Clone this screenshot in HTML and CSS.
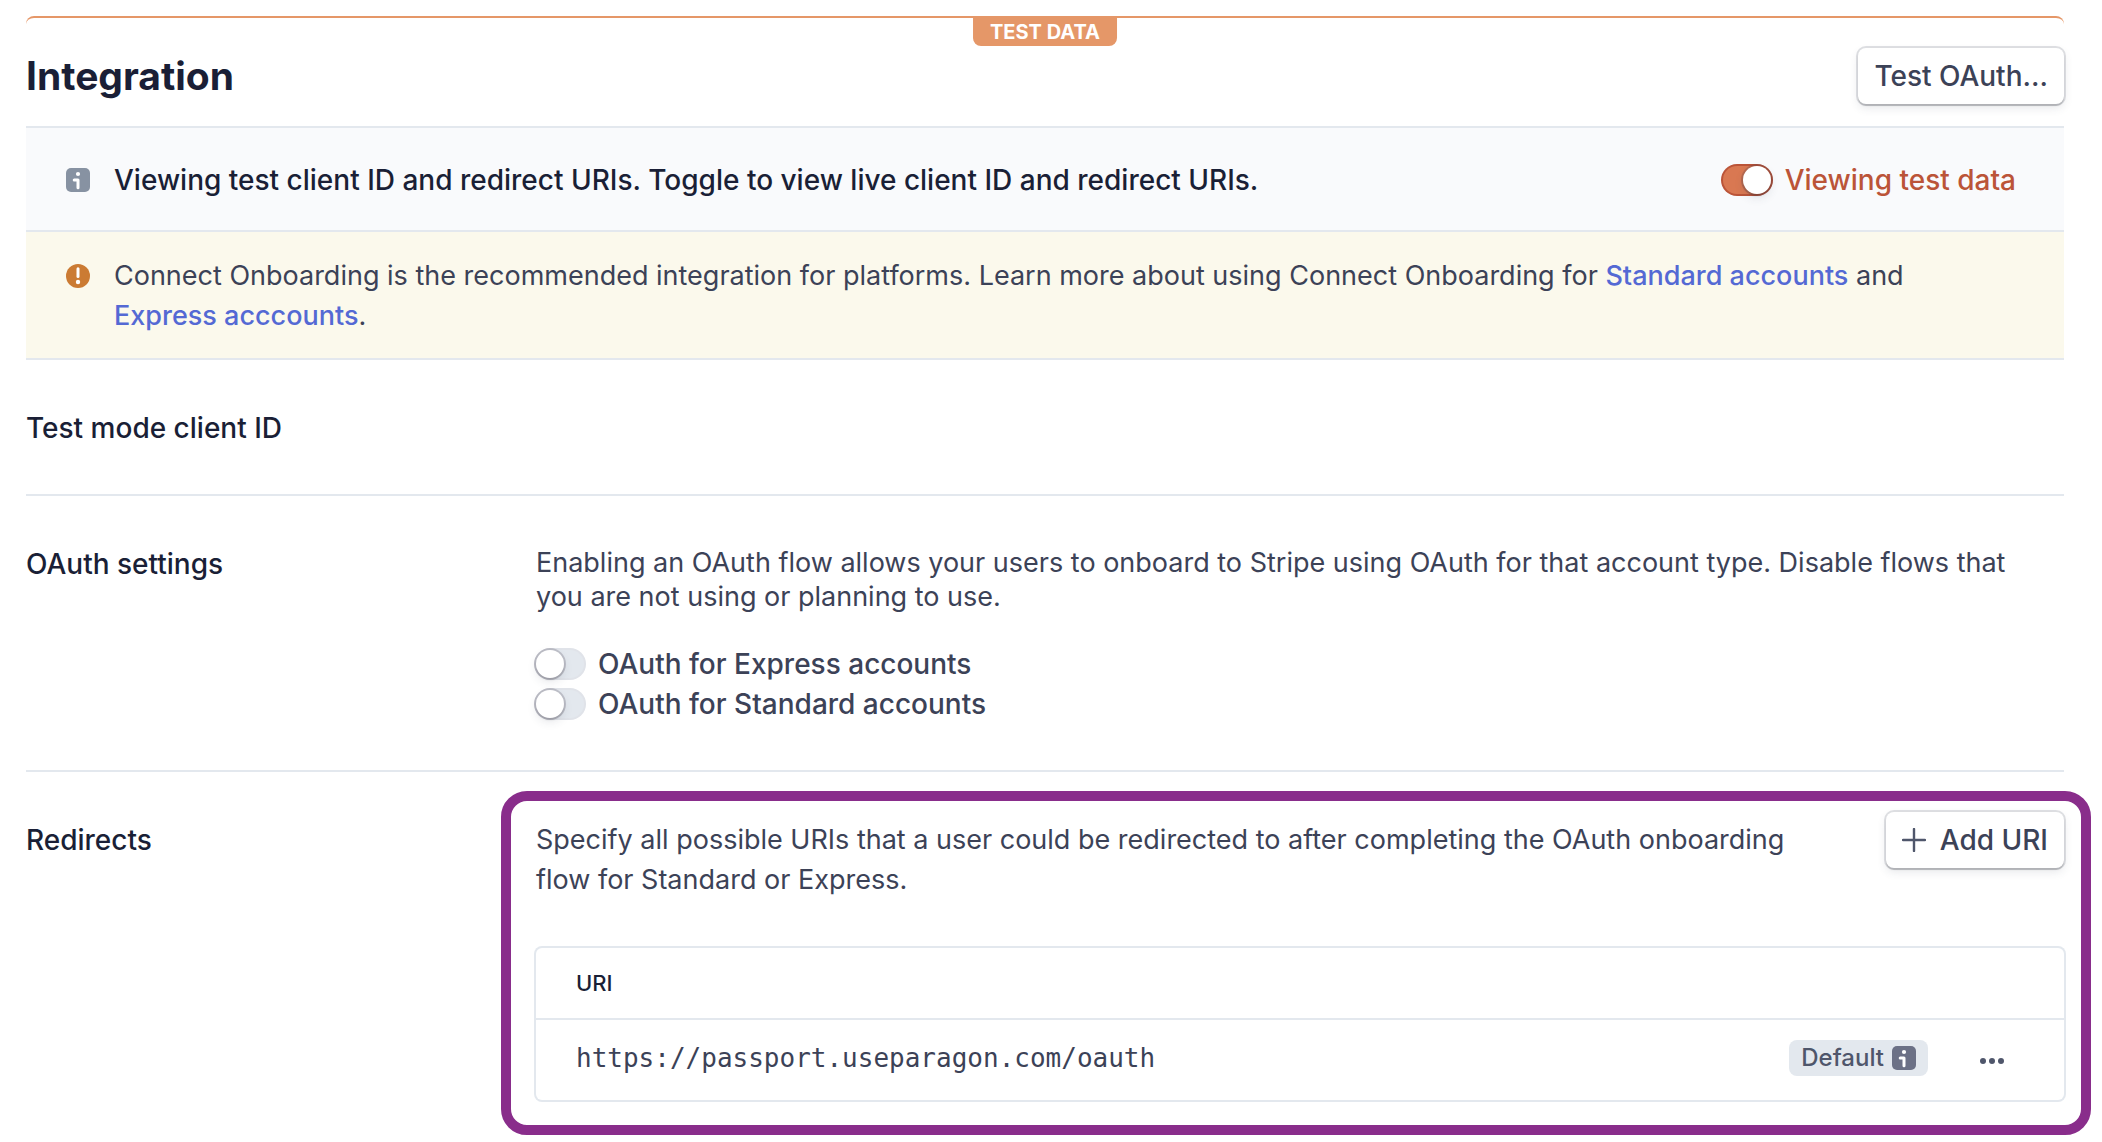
FILE: index.html
```html
<!DOCTYPE html>
<html lang="en">
<head>
<meta charset="utf-8">
<meta name="viewport" content="width=device-width, initial-scale=1">
<title>Integration</title>
<link rel="stylesheet" href="styles.css">
</head>
<body>
<main class="page">
  <header class="header">
    <span class="test-badge">TEST DATA</span>
    <h1 class="title">Integration</h1>
    <button class="button" type="button">Test OAuth...</button>
  </header>

  <div class="notice notice-info">
    <svg class="icon icon-info" viewBox="0 0 24 24" aria-hidden="true">
      <rect width="24" height="24" rx="5"/>
      <circle class="mark" cx="12" cy="6" r="2.1"/>
      <path class="stroke" d="M8.2 12H12v7.7"/>
    </svg>
    <p class="notice-text">Viewing test client ID and redirect URIs. Toggle to view live client ID and redirect URIs.</p>
    <label class="toggle toggle-test">
      <input class="switch" type="checkbox" role="switch" checked>
      <span>Viewing test data</span>
    </label>
  </div>

  <div class="notice notice-warning">
    <svg class="icon icon-warning" viewBox="0 0 24 24" aria-hidden="true">
      <circle cx="12" cy="12" r="12"/>
      <path class="stroke" d="M12 4.8v7.6"/>
      <circle class="mark" cx="12" cy="18" r="2.2"/>
    </svg>
    <p class="notice-text">Connect Onboarding is the recommended integration for platforms. Learn more about using Connect Onboarding for <a class="link" href="#standard">Standard accounts</a> and <a class="link" href="#express">Express acccounts</a>.</p>
  </div>

  <section class="section">
    <h2 class="section-label">Test mode client ID</h2>
  </section>

  <section class="section">
    <h2 class="section-label">OAuth settings</h2>
    <div class="section-body">
      <p class="description description-tight">Enabling an OAuth flow allows your users to onboard to Stripe using OAuth for that account type. Disable flows that you are not using or planning to use.</p>
      <div class="toggles">
        <label class="toggle">
          <input class="switch" type="checkbox" role="switch">
          <span>OAuth for Express accounts</span>
        </label>
        <label class="toggle">
          <input class="switch" type="checkbox" role="switch">
          <span>OAuth for Standard accounts</span>
        </label>
      </div>
    </div>
  </section>

  <section class="section section-redirects">
    <h2 class="section-label">Redirects</h2>
    <div class="section-body highlight">
      <div class="redirects-intro">
        <p class="description">Specify all possible URIs that a user could be redirected to after completing the OAuth onboarding flow for Standard or Express.</p>
        <button class="button" type="button">
          <svg class="icon icon-plus" viewBox="0 0 24 24" aria-hidden="true"><path d="M12 1v22M1 12h22"/></svg>
          Add URI
        </button>
      </div>
      <table class="uris">
        <thead>
          <tr><th colspan="2" scope="col">URI</th></tr>
        </thead>
        <tbody>
          <tr>
            <td class="uri">https://passport.useparagon.com/oauth</td>
            <td>
              <div class="uri-actions">
                <span class="pill">Default
                  <svg class="icon icon-default" viewBox="0 0 24 24" aria-hidden="true">
                    <rect width="24" height="24" rx="5"/>
                    <circle class="mark" cx="12" cy="6" r="2.1"/>
                    <path class="stroke" d="M8.2 12H12v7.7"/>
                  </svg>
                </span>
                <button class="more" type="button" aria-label="More options">
                  <svg class="icon" viewBox="0 0 24 24" aria-hidden="true"><circle cx="3" cy="15" r="3"/><circle cx="12" cy="15" r="3"/><circle cx="21" cy="15" r="3"/></svg>
                </button>
              </div>
            </td>
          </tr>
        </tbody>
      </table>
    </div>
  </section>
</main>
</body>
</html>
```

FILE: styles.css
```css
:root {
  --ink: #1a1f36;
  --text: #3c4257;
  --line: #e3e8ee;
  --test: #bb5438;
  --badge: #e59768;
}

* { box-sizing: border-box; }

body {
  margin: 0;
  background: #fff;
  color: var(--text);
  font: 400 27px/40px Inter, "Liberation Sans", sans-serif;
}

h1, h2, p { margin: 0; }

button { font: inherit; cursor: pointer; }

.page { padding: 16px 38px 40px 26px; }

.icon {
  display: block;
  flex: none;
  width: 24px;
  height: 24px;
}

/* Header */

.header {
  position: relative;
  display: flex;
  align-items: center;
  justify-content: space-between;
  padding: 30px 0 22px;
  border-top: 2px solid var(--badge);
  border-radius: 8px 8px 0 0;
}

.test-badge {
  position: absolute;
  top: -2px;
  left: 50%;
  transform: translateX(-50%);
  padding: 3px 17px 0;
  border-radius: 0 0 8px 8px;
  background: var(--badge);
  color: #fff;
  font-size: 20px;
  font-weight: 700;
  line-height: 27px;
}

.title {
  color: var(--ink);
  font-size: 39px;
  font-weight: 700;
  line-height: 56px;
}

.button {
  display: flex;
  flex: none;
  align-items: center;
  gap: 14px;
  height: 56px;
  padding: 0 16px;
  border: 0;
  border-radius: 8px;
  background: #fff;
  color: var(--text);
  font-size: 28px;
  font-weight: 500;
  box-shadow: 0 0 0 2px rgba(60, 66, 87, .16), 0 2px 1px rgba(0, 0, 0, .16), 0 4px 10px rgba(60, 66, 87, .12);
}

.icon-plus {
  fill: none;
  stroke: #4f566b;
  stroke-width: 2.4;
  stroke-linecap: round;
}

/* Notices */

.notice {
  display: flex;
  align-items: flex-start;
  gap: 24px;
  padding: 24px 56px 22px 40px;
  border-bottom: 2px solid var(--line);
}

.notice .icon { margin-top: 8px; }

.notice-text { flex: 1; }

.notice-info {
  padding: 32px 48px 30px 40px;
  border-top: 2px solid var(--line);
  background: #f9fafc;
  color: var(--ink);
  font-size: 28px;
  font-weight: 500;
}

.notice-warning { background: #fbf9ec; }

.icon-info { fill: #8792a2; }
.icon-warning { fill: #cb7b33; }
.icon-default { fill: #6c7186; }

.mark { fill: #fff; }

.stroke {
  fill: none;
  stroke: #fff;
  stroke-width: 3;
  stroke-linecap: round;
  stroke-linejoin: round;
}

.link {
  color: #5469d4;
  font-weight: 500;
  text-decoration: none;
}

/* Switches */

.toggle {
  display: flex;
  align-items: center;
  gap: 14px;
  font-size: 28px;
  font-weight: 500;
}

.toggle-test { color: var(--test); }

.switch {
  appearance: none;
  display: flex;
  flex: none;
  width: 48px;
  height: 28px;
  margin: 0;
  border-radius: 14px;
  background: var(--line);
  box-shadow: 0 0 0 2px #e0e3e9;
}

.switch::before {
  content: "";
  width: 28px;
  height: 28px;
  border-radius: 50%;
  background: #fff;
  box-shadow: 0 0 0 2px rgba(60, 50, 70, .22), 0 2px 2px rgba(0, 0, 0, .12), 0 4px 10px rgba(60, 66, 87, .12);
}

.switch:checked {
  justify-content: flex-end;
  background: #d97852;
  box-shadow: 0 0 0 2px var(--test);
}

/* Settings sections */

.section {
  display: grid;
  grid-template-columns: 510px 1fr;
  padding: 48px 0 46px;
  border-bottom: 2px solid var(--line);
}

.section-redirects {
  padding-bottom: 0;
  border-bottom: 0;
}

.section-label {
  color: var(--ink);
  font-size: 28px;
  font-weight: 500;
  line-height: 40px;
}

.description-tight {
  padding: 2px 16px 0 0;
  line-height: 34px;
}

.toggles { margin-top: 30px; }

.redirects-intro {
  display: flex;
  align-items: flex-start;
  justify-content: space-between;
  gap: 48px;
  margin-bottom: 48px;
}

.redirects-intro .button { margin-top: -8px; }

/* Frame drawn around the redirect settings */

.highlight { position: relative; }

.highlight::after {
  content: "";
  position: absolute;
  inset: -29px -27px -35px -35px;
  border: 10px solid #892d8b;
  border-radius: 26px;
  pointer-events: none;
}

/* URI table */

.uris {
  width: 100%;
  border-spacing: 0;
  border-radius: 6px;
  box-shadow: 0 0 0 2px var(--line);
}

.uris th {
  padding: 15px 40px;
  border-bottom: 2px solid var(--line);
  color: var(--ink);
  font-size: 22px;
  font-weight: 500;
  text-align: left;
}

.uris td { padding: 18px 0 22px; }

.uris .uri {
  padding-left: 40px;
  font-family: "DejaVu Sans Mono", monospace;
  font-size: 26px;
}

.uris .uri-actions {
  display: flex;
  align-items: center;
  justify-content: flex-end;
  gap: 52px;
  padding-right: 60px;
}

.pill {
  display: flex;
  align-items: center;
  gap: 8px;
  padding: 0 12px;
  border-radius: 8px;
  background: var(--line);
  color: #4f566b;
  font-size: 24px;
  font-weight: 500;
  line-height: 36px;
}

.more {
  padding: 0;
  border: 0;
  background: none;
  fill: #4f566b;
}
```
